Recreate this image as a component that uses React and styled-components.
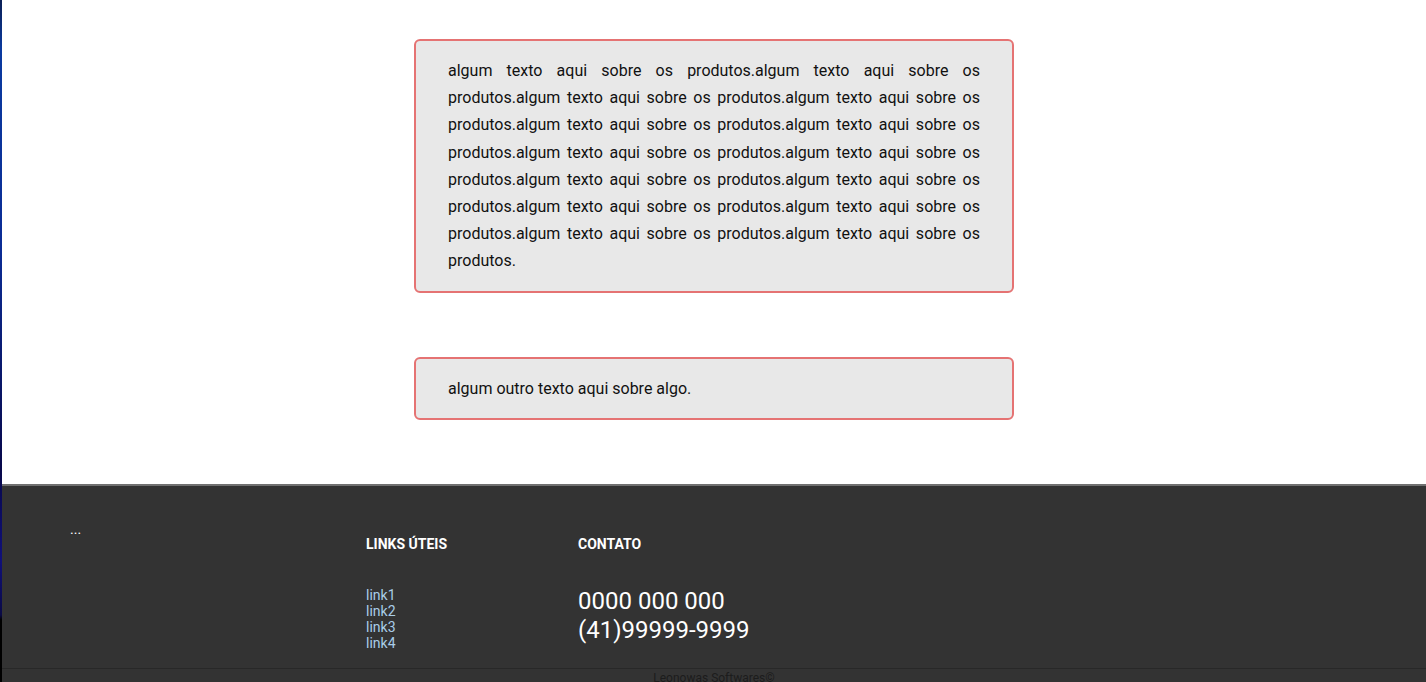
import React from 'react';
import styled, {createGlobalStyle} from 'styled-components';

const GlobalStyle = createGlobalStyle`
html, body {
    margin: 0;
    padding: 0;
    overflow: hidden;
    background: #fff;
}
body {
    font-family: Roboto, "Liberation Sans", Arial, sans-serif;
}
`;

const Page = styled.div`
display: flex;
min-height: 100vh;
`;
// faixa azul na borda esquerda
const SideStrip = styled.div`
width: 2px;
flex-shrink: 0;
background: linear-gradient(to bottom, #0b1f55 0px, #0a3aa0 50px, #0b2c95 250px, #08084a 470px, #10107a 560px, #0a0a45 615px, #000 620px, #000 100%);
`;
const Main = styled.div`
flex: 1;
display: flex;
flex-direction: column;
`;
const Content = styled.section`
display: flex;
flex-direction: column;
align-items: center;
gap: 64px;
padding: 39px 0 64px;
`;
const TextBox = styled.div`
box-sizing: border-box;
width: 600px;
padding: 16px 32px;
background: #e8e8e8;
border: 2px solid #e57373;
border-radius: 6px;
color: #111;
font-size: 16px;
line-height: 1.7;
text-align: justify;
`;

const Footer = styled.footer`
background: #333;
border-top: 2px solid #707070;
`;
const FooterCols = styled.div`
display: grid;
grid-template-columns: 296px 212px 1fr;
height: 182px;
padding-left: 68px;
`;
const Dots = styled.div`
padding-top: 33px;
color: #fff;
font-size: 14px;
line-height: 20px;
`;
const FooterCol = styled.div`
padding-top: 50px;
display: flex;
flex-direction: column;
`;
const ColTitle = styled.h4`
margin: 0 0 35px;
color: #fff;
font-size: 14px;
line-height: 16px;
font-weight: 700;
text-transform: uppercase;
`;
const LinkList = styled.ul`
margin: 0;
padding: 0;
list-style: none;
`;
const LinkItem = styled.li`
font-size: 14px;
line-height: 16px;
a {
    color: #a9cde8;
    text-decoration: none;
}
`;
const Phone = styled.div`
color: #fff;
font-size: 24px;
line-height: 29px;
`;
const Copy = styled.div`
border-top: 1px solid #282828;
text-align: center;
color: #1c1c1c;
font-size: 12px;
line-height: 16px;
padding-top: 1px;
`;

const longText = Array(14).fill('algum texto aqui sobre os produtos.').join('');
const links = ['link1', 'link2', 'link3', 'link4'];

const App = () => {
    return (
        <>
        <GlobalStyle />
        <Page>
            <SideStrip />
            <Main>
                <Content>
                    <TextBox>{longText}</TextBox>
                    <TextBox>algum outro texto aqui sobre algo.</TextBox>
                </Content>
                <Footer>
                    <FooterCols>
                        <Dots>...</Dots>
                        <FooterCol>
                            <ColTitle>Links úteis</ColTitle>
                            <LinkList>
                                {links.map((l) => <LinkItem key={l}><a href="#">{l}</a></LinkItem>)}
                            </LinkList>
                        </FooterCol>
                        <FooterCol>
                            <ColTitle>Contato</ColTitle>
                            <Phone>0000 000 000</Phone>
                            <Phone>(41)99999-9999</Phone>
                        </FooterCol>
                    </FooterCols>
                    <Copy>Leonowas Softwares©</Copy>
                </Footer>
            </Main>
        </Page>
        </>
    );
}

export default App;
